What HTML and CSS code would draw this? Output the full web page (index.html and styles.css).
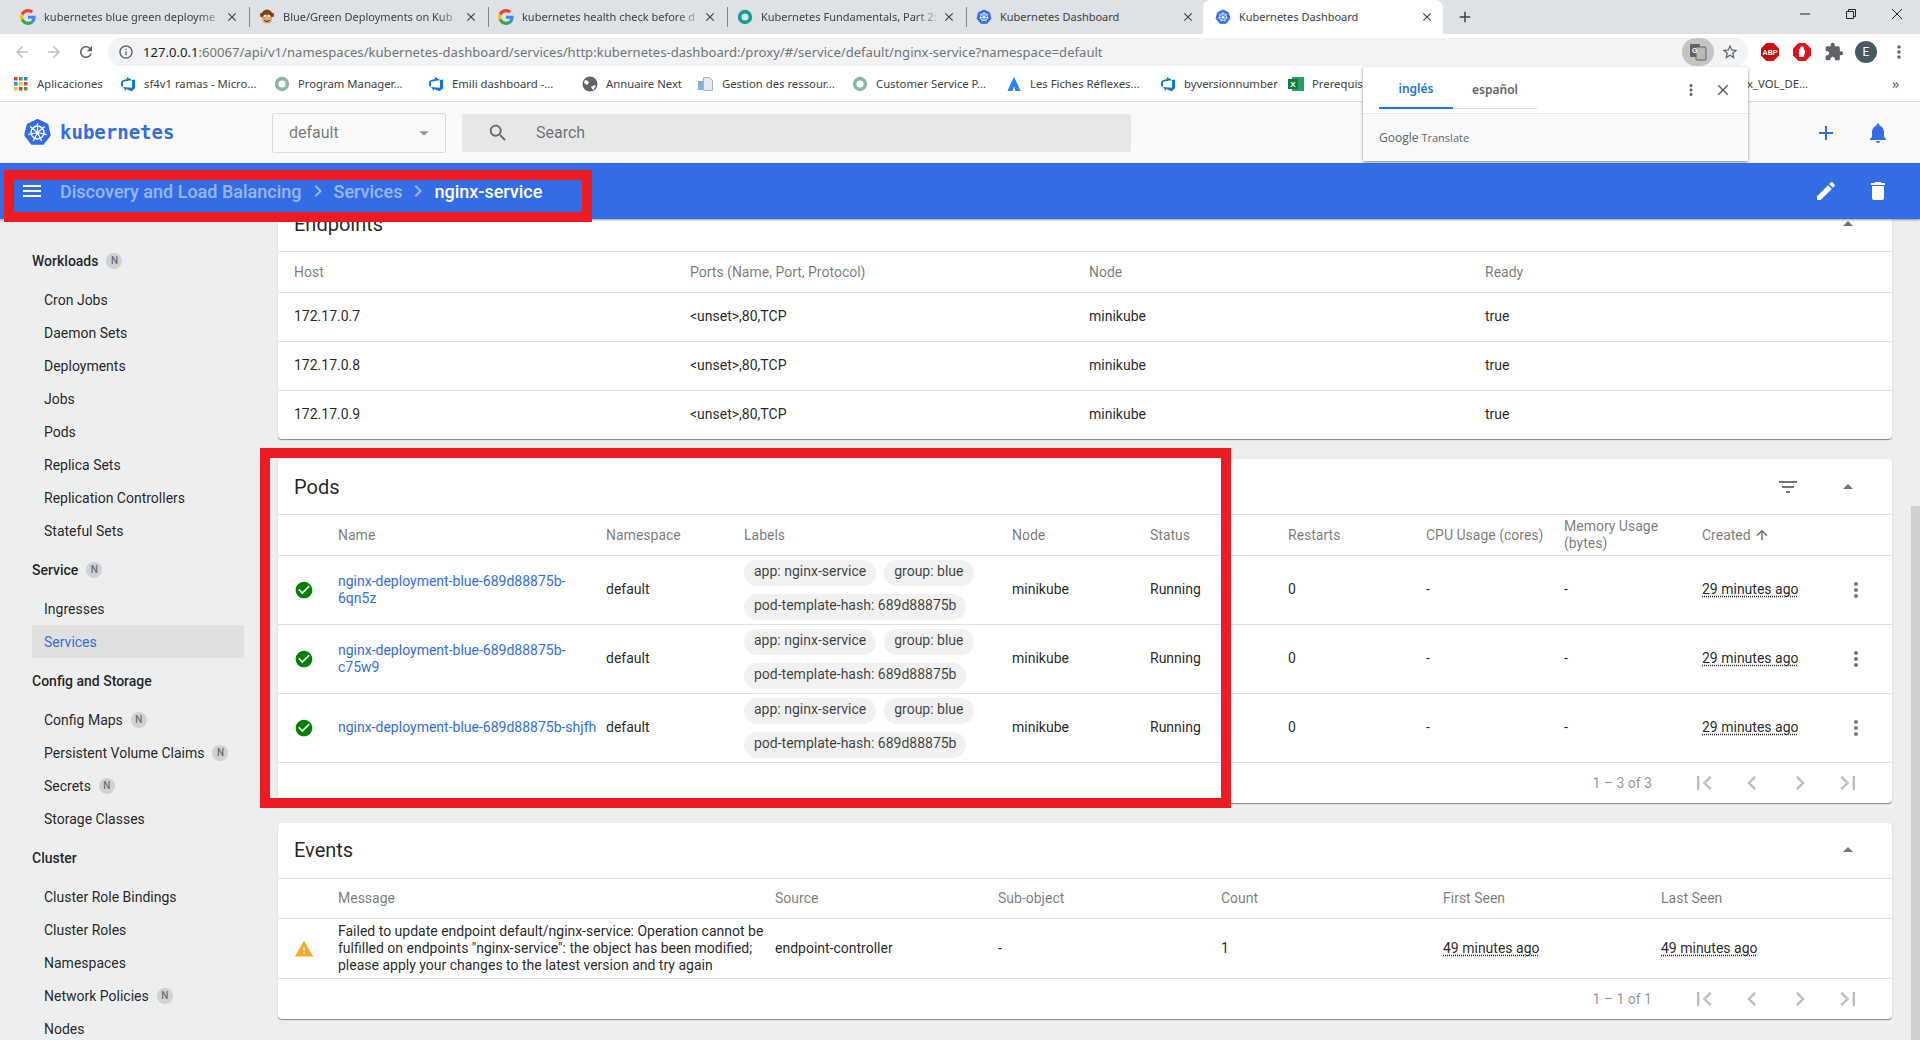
FILE: index.html
```html
<!DOCTYPE html>
<html lang="en">
<head>
  <meta charset="UTF-8" />
  <title>Kubernetes Dashboard</title>
  <link rel="stylesheet" href="styles.css">
</head>
<body>
  <!-- icon sheet -->
  <svg class="sheet" width="0" height="0">
    <symbol id="i-g" viewBox="0 0 48 48">
      <path fill="#EA4335" d="M24 9.5c3.54 0 6.71 1.22 9.21 3.6l6.85-6.85C35.9 2.38 30.47 0 24 0 14.62 0 6.51 5.38 2.56 13.22l7.98 6.19C12.43 13.72 17.74 9.5 24 9.5z"/>
      <path fill="#4285F4" d="M46.98 24.55c0-1.57-.15-3.09-.38-4.55H24v9.02h12.94c-.58 2.96-2.26 5.48-4.78 7.18l7.73 6c4.51-4.18 7.09-10.36 7.09-17.65z"/>
      <path fill="#FBBC05" d="M10.53 28.59c-.48-1.45-.76-2.99-.76-4.59s.27-3.14.76-4.59l-7.98-6.19C.92 16.46 0 20.12 0 24c0 3.88.92 7.54 2.56 10.78l7.97-6.19z"/>
      <path fill="#34A853" d="M24 48c6.48 0 11.93-2.13 15.89-5.81l-7.73-6c-2.15 1.45-4.92 2.3-8.16 2.3-6.26 0-11.57-4.22-13.47-9.91l-7.98 6.19C6.51 42.62 14.62 48 24 48z"/>
    </symbol>
    <symbol id="i-k8s" viewBox="-1 -1 26 26">
      <path fill="#326de6" stroke="#326de6" stroke-width="1.6" stroke-linejoin="round" d="M12 .6 20.9 4.9 23.1 14.5 17 22.2H7L.9 14.5 3.1 4.9z"/>
      <circle cx="12" cy="12" r="5.8" fill="none" stroke="#fff" stroke-width="1.3"/>
      <path stroke="#fff" stroke-width="1.1" d="M12 12V3.5M12 12l6.6-5.3M12 12l8.3 1.9M12 12l3.7 7.7M12 12l-3.7 7.7M12 12l-8.3 1.9M12 12 5.4 6.7"/>
      <circle cx="12" cy="12" r="1.6" fill="#fff"/>
    </symbol>
    <symbol id="i-monkey" viewBox="0 0 16 16">
      <circle cx="3" cy="6" r="2.2" fill="#8a4b1c"/><circle cx="13" cy="6" r="2.2" fill="#8a4b1c"/>
      <circle cx="8" cy="6" r="5.4" fill="#7a3f14"/><ellipse cx="8" cy="10" rx="5" ry="4.6" fill="#e2a868"/>
      <circle cx="6" cy="7" r="1.2" fill="#fff"/><circle cx="10" cy="7" r="1.2" fill="#fff"/>
      <path stroke="#3b1d08" stroke-width="1" fill="none" d="M5.2 11.2c1.6 1.6 4 1.6 5.6 0"/>
    </symbol>
    <symbol id="i-ring" viewBox="0 0 16 16">
      <circle cx="8" cy="8" r="5.4" fill="none" stroke="currentColor" stroke-width="3.6"/>
    </symbol>
    <symbol id="i-azure" viewBox="0 0 18 18">
      <path fill="#0f78d4" d="M17 4v9.74l-4 3.28-6.2-2.26V17l-3.51-4.59 10.23.8V4.44zm-3.41.49L7.85 1v2.29L2.72 4.8 1.2 6.75v4.43l2.2.97V6.47z"/>
    </symbol>
    <symbol id="i-close" viewBox="0 0 24 24"><path d="M19 6.41L17.59 5 12 10.59 6.41 5 5 6.41 10.59 12 5 17.59 6.41 19 12 13.41 17.59 19 19 17.59 13.41 12z"/></symbol>
    <symbol id="i-add" viewBox="0 0 24 24"><path d="M19 13h-6v6h-2v-6H5v-2h6V5h2v6h6v2z"/></symbol>
    <symbol id="i-more" viewBox="0 0 24 24"><path d="M12 8c1.1 0 2-.9 2-2s-.9-2-2-2-2 .9-2 2 .9 2 2 2zm0 2c-1.1 0-2 .9-2 2s.9 2 2 2 2-.9 2-2-.9-2-2-2zm0 6c-1.1 0-2 .9-2 2s.9 2 2 2 2-.9 2-2-.9-2-2-2z"/></symbol>
    <symbol id="i-chev" viewBox="0 0 24 24"><path d="M10 6L8.59 7.41 13.17 12l-4.58 4.59L10 18l6-6z"/></symbol>
    <symbol id="i-up" viewBox="0 0 24 24"><path d="M7 14l5-5 5 5z"/></symbol>
    <symbol id="i-check" viewBox="0 0 24 24"><path d="M12 2C6.48 2 2 6.48 2 12s4.48 10 10 10 10-4.48 10-10S17.52 2 12 2zm-2 15l-5-5 1.41-1.41L10 14.17l7.59-7.59L19 8l-9 9z"/></symbol>
    <symbol id="i-first" viewBox="0 0 24 24"><path d="M18.41 16.59L13.82 12l4.59-4.59L17 6l-6 6 6 6zM6 6h2v12H6z"/></symbol>
    <symbol id="i-prev" viewBox="0 0 24 24"><path d="M15.41 7.41L14 6l-6 6 6 6 1.41-1.41L10.83 12z"/></symbol>
    <symbol id="i-last" viewBox="0 0 24 24"><path d="M5.59 7.41L10.18 12l-4.59 4.59L7 18l6-6-6-6zM16 6h2v12h-2z"/></symbol>
  </svg>

  <!-- browser chrome -->
  <div class="tabstrip">
    <div class="tab"><svg class="fav"><use href="#i-g"/></svg><span class="tab-title">kubernetes blue green deployme</span><svg class="tab-x"><use href="#i-close"/></svg></div>
    <div class="tab"><svg class="fav"><use href="#i-monkey"/></svg><span class="tab-title">Blue/Green Deployments on Kub</span><svg class="tab-x"><use href="#i-close"/></svg></div>
    <div class="tab"><svg class="fav"><use href="#i-g"/></svg><span class="tab-title">kubernetes health check before d</span><svg class="tab-x"><use href="#i-close"/></svg></div>
    <div class="tab"><svg class="fav teal"><use href="#i-ring"/></svg><span class="tab-title">Kubernetes Fundamentals, Part 2:</span><svg class="tab-x"><use href="#i-close"/></svg></div>
    <div class="tab tab-nosep"><svg class="fav"><use href="#i-k8s"/></svg><span class="tab-title tab-full">Kubernetes Dashboard</span><svg class="tab-x"><use href="#i-close"/></svg></div>
    <div class="tab tab-active"><svg class="fav"><use href="#i-k8s"/></svg><span class="tab-title tab-full">Kubernetes Dashboard</span><svg class="tab-x"><use href="#i-close"/></svg></div>
    <svg class="newtab"><use href="#i-add"/></svg>
    <div class="winbtns">
      <svg width="12" height="12" viewBox="0 0 12 12"><path d="M1 6h10" stroke="#222" fill="none"/></svg>
      <svg width="12" height="12" viewBox="0 0 12 12"><path d="M1.500 3.500h7v7h-7zM3.500 3.500v-2h7v7h-2" stroke="#222" fill="none"/></svg>
      <svg width="12" height="12" viewBox="0 0 12 12"><path d="M1 1l10 10M11 1L1 11" stroke="#222" fill="none"/></svg>
    </div>
  </div>

  <div class="toolbar">
    <svg class="nav nav-off" viewBox="0 0 24 24"><path d="M20 11H7.830l5.590-5.590L12 4l-8 8 8 8 1.410-1.410L7.830 13H20v-2z"/></svg>
    <svg class="nav nav-off" viewBox="0 0 24 24"><path d="M12 4l-1.410 1.410L16.170 11H4v2h12.170l-5.580 5.590L12 20l8-8z"/></svg>
    <svg class="nav" viewBox="0 0 24 24"><path d="M17.650 6.350C16.200 4.900 14.210 4 12 4c-4.420 0-7.990 3.580-7.990 8s3.570 8 7.990 8c3.730 0 6.840-2.550 7.730-6h-2.080c-.82 2.330-3.040 4-5.650 4-3.310 0-6-2.690-6-6s2.690-6 6-6c1.660 0 3.140.69 4.220 1.780L13 11h7V4l-2.350 2.350z"/></svg>
    <div class="omnibox">
      <svg class="omni-info" viewBox="0 0 24 24"><path d="M11 7h2v2h-2zm0 4h2v6h-2zm1-9C6.480 2 2 6.480 2 12s4.480 10 10 10 10-4.480 10-10S17.520 2 12 2zm0 18c-4.410 0-8-3.590-8-8s3.590-8 8-8 8 3.590 8 8-3.590 8-8 8z"/></svg>
      <span class="url"><b>127.0.0.1</b>:60067/api/v1/namespaces/kubernetes-dashboard/services/http:kubernetes-dashboard:/proxy/#/service/default/nginx-service?namespace=default</span>
      <span class="translate-btn">
        <svg width="20" height="20" viewBox="0 0 20 20"><rect x="2" y="2" width="10" height="13" rx="1" fill="#5f6368"/><rect x="8" y="5" width="10" height="13" rx="1" fill="#b9b9b9" stroke="#5f6368"/><text x="4" y="11" class="tr-g">G</text></svg>
      </span>
      <svg class="omni-star" viewBox="0 0 24 24"><path d="M22 9.240l-7.190-.62L12 2 9.190 8.630 2 9.240l5.460 4.730L5.820 21 12 17.270 18.180 21l-1.630-7.030L22 9.240zM12 15.400l-3.760 2.270 1-4.280-3.320-2.880 4.380-.38L12 6.100l1.710 4.040 4.380.38-3.320 2.880 1 4.280L12 15.400z"/></svg>
    </div>
    <div class="exts">
      <svg width="18" height="18" viewBox="0 0 18 18"><path fill="#c70d0d" d="M5.500 0h7L18 5.500v7L12.500 18h-7L0 12.500v-7z"/><text x="9" y="12" class="abp">ABP</text></svg>
      <svg width="18" height="18" viewBox="0 0 18 18"><path fill="#e0131a" d="M5.500 0h7L18 5.500v7L12.500 18h-7L0 12.500v-7z"/><path fill="#fff" d="M6 14V6h1.200v-2h1.200v-1h1.200v1h1.200v3h1.200v3l-1.500 4z"/></svg>
      <svg class="ext-puzzle" width="20" height="20" viewBox="0 0 24 24" fill="#5f6368"><path d="M20.500 11H19V7c0-1.100-.9-2-2-2h-4V3.500C13 2.120 11.880 1 10.500 1S8 2.120 8 3.500V5H4c-1.100 0-1.990.9-1.990 2v3.800H3.500c1.490 0 2.700 1.210 2.700 2.700s-1.210 2.700-2.700 2.700H2V20c0 1.100.9 2 2 2h3.800v-1.500c0-1.490 1.210-2.700 2.700-2.700 1.490 0 2.700 1.210 2.700 2.700V22H17c1.100 0 2-.9 2-2v-4h1.500c1.380 0 2.500-1.120 2.500-2.500S21.880 11 20.500 11z"/></svg>
      <span class="avatar">E</span>
      <svg class="ext-more"><use href="#i-more"/></svg>
    </div>
  </div>

  <div class="bookmarks">
    <div class="bm bm-apps"><svg width="16" height="16" viewBox="0 0 16 16"><rect x="1" y="1" width="3.500" height="3.500" fill="#e53935"/><rect x="6" y="1" width="3.500" height="3.500" fill="#43a047"/><rect x="11" y="1" width="3.500" height="3.500" fill="#1e88e5"/><rect x="1" y="6" width="3.500" height="3.500" fill="#1e88e5"/><rect x="6" y="6" width="3.500" height="3.500" fill="#fbc02d"/><rect x="11" y="6" width="3.500" height="3.500" fill="#e53935"/><rect x="1" y="11" width="3.500" height="3.500" fill="#fbc02d"/><rect x="6" y="11" width="3.500" height="3.500" fill="#e53935"/><rect x="11" y="11" width="3.500" height="3.500" fill="#43a047"/></svg>Aplicaciones</div>
    <div class="bm"><svg class="fav"><use href="#i-azure"/></svg>sf4v1 ramas - Micro...</div>
    <div class="bm"><svg class="fav sage"><use href="#i-ring"/></svg>Program Manager...</div>
    <div class="bm"><svg class="fav"><use href="#i-azure"/></svg>Emili dashboard -...</div>
    <div class="bm bm-short"><svg width="16" height="16" viewBox="0 0 16 16"><circle cx="8" cy="8" r="7.500" fill="#5f6368"/><path fill="#fff" d="M3 4l3 1 1 2-2 2-3-2zM9 11l3-2 2 1-3 4z"/></svg>Annuaire Next</div>
    <div class="bm"><svg width="16" height="16" viewBox="0 0 16 16"><rect x="0" y="5" width="5" height="9" fill="#7fb0d8"/><path fill="#e6e9ee" stroke="#a9b2bc" d="M5.500 1.500h6l3 3v10h-9z"/></svg>Gestion des ressour...</div>
    <div class="bm"><svg class="fav sage"><use href="#i-ring"/></svg>Customer Service P...</div>
    <div class="bm"><svg width="16" height="16" viewBox="0 0 16 16"><path fill="#2684ff" d="M8 1l3.500 7L14.500 15h-5L8 10.500 6.500 15h-5L4.500 8z"/></svg>Les Fiches Réflexes...</div>
    <div class="bm bm-mid"><svg class="fav"><use href="#i-azure"/></svg>byversionnumber</div>
    <div class="bm"><svg width="16" height="16" viewBox="0 0 16 16"><rect x="4" y="1" width="12" height="14" fill="#21a366"/><rect x="0" y="3" width="10" height="10" fill="#107c41"/><text x="5" y="11" class="xls">X</text></svg>Prerequisites</div>
    <span class="bm-tail">x_VOL_DE...</span>
    <span class="bm-more">»</span>
  </div>

  <!-- dashboard -->
  <header class="kd-top">
    <svg class="kd-logo"><use href="#i-k8s"/></svg>
    <span class="kd-word">kubernetes</span>
    <div class="ns-select"><span>default</span><svg class="ns-caret" viewBox="0 0 24 24"><path d="M7 10l5 5 5-5z"/></svg></div>
    <div class="search">
      <svg class="search-ico" viewBox="0 0 24 24"><path d="M15.500 14h-.79l-.28-.27C15.410 12.590 16 11.110 16 9.500 16 5.910 13.090 3 9.500 3S3 5.910 3 9.500 5.910 16 9.500 16c1.610 0 3.090-.59 4.230-1.570l.27.28v.79l5 4.990L20.490 19l-4.990-5zm-6 0C7.010 14 5 11.990 5 9.500S7.010 5 9.500 5 14 7.010 14 9.500 11.990 14 9.500 14z"/></svg>
      <span>Search</span>
    </div>
    <div class="kd-actions">
      <svg class="kd-act"><use href="#i-add"/></svg>
      <svg class="kd-act" viewBox="0 0 24 24"><path d="M12 22c1.100 0 2-.9 2-2h-4c0 1.100.89 2 2 2zm6-6v-5c0-3.070-1.640-5.640-4.500-6.320V4c0-.83-.67-1.500-1.500-1.500s-1.500.67-1.500 1.500v.68C7.630 5.360 6 7.920 6 11v5l-2 2v1h16v-1l-2-2z"/></svg>
    </div>
  </header>

  <div class="crumbbar">
    <svg class="crumb-menu" viewBox="0 0 24 24"><path d="M3 18h18v-2H3v2zm0-5h18v-2H3v2zm0-7v2h18V6H3z"/></svg>
    <span class="crumb">Discovery and Load Balancing</span>
    <svg class="crumb-sep"><use href="#i-chev"/></svg>
    <span class="crumb">Services</span>
    <svg class="crumb-sep"><use href="#i-chev"/></svg>
    <span class="crumb crumb-now">nginx-service</span>
    <div class="crumb-actions">
      <svg viewBox="0 0 24 24"><path d="M3 17.250V21h3.750L17.810 9.940l-3.750-3.750L3 17.250zM20.710 7.040c.39-.39.39-1.020 0-1.410l-2.340-2.340c-.39-.39-1.020-.39-1.410 0l-1.830 1.830 3.750 3.750 1.830-1.830z"/></svg>
      <svg viewBox="0 0 24 24"><path d="M6 19c0 1.100.9 2 2 2h8c1.100 0 2-.9 2-2V7H6v12zM19 4h-3.500l-1-1h-5l-1 1H5v2h14V4z"/></svg>
    </div>
  </div>

  <div class="layout">
    <nav class="side">
      <div class="side-title">Workloads <span class="badge">N</span></div>
      <a class="side-item">Cron Jobs</a>
      <a class="side-item">Daemon Sets</a>
      <a class="side-item">Deployments</a>
      <a class="side-item">Jobs</a>
      <a class="side-item">Pods</a>
      <a class="side-item">Replica Sets</a>
      <a class="side-item">Replication Controllers</a>
      <a class="side-item">Stateful Sets</a>
      <div class="side-title">Service <span class="badge">N</span></div>
      <a class="side-item">Ingresses</a>
      <a class="side-item side-on">Services</a>
      <div class="side-title">Config and Storage</div>
      <a class="side-item">Config Maps <span class="badge">N</span></a>
      <a class="side-item">Persistent Volume Claims <span class="badge">N</span></a>
      <a class="side-item">Secrets <span class="badge">N</span></a>
      <a class="side-item">Storage Classes</a>
      <div class="side-title">Cluster</div>
      <a class="side-item">Cluster Role Bindings</a>
      <a class="side-item">Cluster Roles</a>
      <a class="side-item">Namespaces</a>
      <a class="side-item">Network Policies <span class="badge">N</span></a>
      <a class="side-item">Nodes</a>
    </nav>

    <main class="content">
      <section class="card card-first">
        <div class="card-head">
          <h3>Endpoints</h3>
          <svg class="card-toggle"><use href="#i-up"/></svg>
        </div>
        <table class="tbl tbl-endpoints">
          <colgroup><col class="ep1"><col class="ep2"><col class="ep3"><col></colgroup>
          <thead><tr><th>Host</th><th>Ports (Name, Port, Protocol)</th><th>Node</th><th>Ready</th></tr></thead>
          <tbody>
            <tr><td>172.17.0.7</td><td>&lt;unset&gt;,80,TCP</td><td>minikube</td><td>true</td></tr>
            <tr><td>172.17.0.8</td><td>&lt;unset&gt;,80,TCP</td><td>minikube</td><td>true</td></tr>
            <tr><td>172.17.0.9</td><td>&lt;unset&gt;,80,TCP</td><td>minikube</td><td>true</td></tr>
          </tbody>
        </table>
      </section>

      <section class="card">
        <div class="card-head">
          <h3>Pods</h3>
          <svg class="card-filter" viewBox="0 0 24 24"><path d="M10 18h4v-2h-4v2zM3 6v2h18V6H3zm3 7h12v-2H6v2z"/></svg>
          <svg class="card-toggle"><use href="#i-up"/></svg>
        </div>
        <table class="tbl tbl-pods">
          <colgroup><col class="p0"><col class="p1"><col class="p2"><col class="p3"><col class="p4"><col class="p4"><col class="p4"><col class="p4"><col class="p4"><col class="p5"><col></colgroup>
          <thead><tr><th></th><th>Name</th><th>Namespace</th><th>Labels</th><th>Node</th><th>Status</th><th>Restarts</th><th>CPU Usage (cores)</th><th>Memory Usage (bytes)</th><th>Created <svg class="sort" viewBox="0 0 24 24"><path d="M4 12l1.410 1.410L11 7.830V20h2V7.830l5.580 5.590L20 12l-8-8-8 8z"/></svg></th><th></th></tr></thead>
          <tbody>
            <tr>
              <td class="cell-ico"><svg class="ok"><use href="#i-check"/></svg></td>
              <td><a class="lnk">nginx-deployment-blue-689d88875b-6qn5z</a></td>
              <td>default</td>
              <td><div class="chips"><span class="chip">app: nginx-service</span><span class="chip">group: blue</span><span class="chip">pod-template-hash: 689d88875b</span></div></td>
              <td>minikube</td><td>Running</td><td>0</td><td>-</td><td>-</td>
              <td><span class="ago">29 minutes ago</span></td>
              <td class="cell-more"><svg class="more"><use href="#i-more"/></svg></td>
            </tr>
            <tr>
              <td class="cell-ico"><svg class="ok"><use href="#i-check"/></svg></td>
              <td><a class="lnk">nginx-deployment-blue-689d88875b-c75w9</a></td>
              <td>default</td>
              <td><div class="chips"><span class="chip">app: nginx-service</span><span class="chip">group: blue</span><span class="chip">pod-template-hash: 689d88875b</span></div></td>
              <td>minikube</td><td>Running</td><td>0</td><td>-</td><td>-</td>
              <td><span class="ago">29 minutes ago</span></td>
              <td class="cell-more"><svg class="more"><use href="#i-more"/></svg></td>
            </tr>
            <tr>
              <td class="cell-ico"><svg class="ok"><use href="#i-check"/></svg></td>
              <td><a class="lnk">nginx-deployment-blue-689d88875b-shjfh</a></td>
              <td>default</td>
              <td><div class="chips"><span class="chip">app: nginx-service</span><span class="chip">group: blue</span><span class="chip">pod-template-hash: 689d88875b</span></div></td>
              <td>minikube</td><td>Running</td><td>0</td><td>-</td><td>-</td>
              <td><span class="ago">29 minutes ago</span></td>
              <td class="cell-more"><svg class="more"><use href="#i-more"/></svg></td>
            </tr>
          </tbody>
        </table>
        <div class="pager">
          <span class="pager-range">1 – 3 of 3</span>
          <svg><use href="#i-first"/></svg><svg><use href="#i-prev"/></svg><svg><use href="#i-chev"/></svg><svg><use href="#i-last"/></svg>
        </div>
      </section>

      <section class="card">
        <div class="card-head">
          <h3>Events</h3>
          <svg class="card-toggle"><use href="#i-up"/></svg>
        </div>
        <table class="tbl tbl-events">
          <colgroup><col class="p0"><col class="e1"><col class="e2"><col class="e3"><col class="e3b"><col class="e4"><col></colgroup>
          <thead><tr><th></th><th>Message</th><th>Source</th><th>Sub-object</th><th>Count</th><th>First Seen</th><th>Last Seen</th></tr></thead>
          <tbody>
            <tr>
              <td class="cell-ico"><svg class="warn" viewBox="0 0 24 24"><path d="M1 21h22L12 2 1 21zm12-3h-2v-2h2v2zm0-4h-2v-4h2v4z"/></svg></td>
              <td>Failed to update endpoint default/nginx-service: Operation cannot be fulfilled on endpoints "nginx-service": the object has been modified; please apply your changes to the latest version and try again</td>
              <td>endpoint-controller</td><td>-</td><td>1</td>
              <td><span class="ago">49 minutes ago</span></td>
              <td><span class="ago">49 minutes ago</span></td>
            </tr>
          </tbody>
        </table>
        <div class="pager">
          <span class="pager-range">1 – 1 of 1</span>
          <svg><use href="#i-first"/></svg><svg><use href="#i-prev"/></svg><svg><use href="#i-chev"/></svg><svg><use href="#i-last"/></svg>
        </div>
      </section>
    </main>
  </div>

  <div class="thumb"></div>

  <!-- translate bubble -->
  <div class="bubble">
    <div class="bubble-top">
      <div class="bubble-tabs"><span class="bt bt-on">inglés</span><span class="bt">español</span></div>
      <svg class="bubble-more"><use href="#i-more"/></svg>
      <svg class="bubble-x"><use href="#i-close"/></svg>
    </div>
    <div class="bubble-foot"><span class="g-word">Google</span> Translate</div>
  </div>

  <!-- annotation boxes drawn on the screenshot -->
  <div class="mark mark-crumb"></div>
  <div class="mark mark-pods"></div>
</body>
</html>
```

FILE: styles.css
```css
* {
  box-sizing: border-box;
}

html, body {
  margin: 0;
  height: 1040px;
  overflow: hidden;
}

body {
  position: relative;
  background: #edeef0;
  font-family: Roboto, sans-serif;
  font-size: 14px;
  color: rgba(0,0,0,.87);
}

.sheet {
  position: absolute;
}

svg {
  flex: none;
}

/* browser chrome */
.tabstrip {
  display: flex;
  align-items: center;
  height: 34px;
  padding-left: 11px;
  background: #dee1e6;
}

.tab {
  position: relative;
  display: flex;
  align-items: center;
  width: 239px;
  flex: none;
  height: 34px;
  padding-left: 9px;
  font-family: "Noto Sans", sans-serif;
  font-size: 11px;
  color: #3c4043;
}

.tab::after {
  content: "";
  position: absolute;
  right: 0;
  top: 7px;
  width: 1px;
  height: 20px;
  background: #80868b;
}

.tab-nosep::after, .tab-active::after {
  display: none;
}

.tab-active {
  width: 240px;
  margin-left: -3px;
  padding-left: 12px;
  background: #fff;
  border-radius: 8px 8px 0 0;
}

.fav {
  width: 16px;
  height: 16px;
}

.teal {
  color: #0f9d9d;
}

.sage {
  color: #8db5a6;
}

.tab-title {
  width: 176px;
  margin-left: 8px;
  margin-top: -2px;
  white-space: nowrap;
  -webkit-mask-image: linear-gradient(to right, #000 88%, rgba(0,0,0,.2));
  mask-image: linear-gradient(to right, #000 88%, rgba(0,0,0,.2));
}

.tab-full {
  -webkit-mask-image: none;
  mask-image: none;
}

.tab-x {
  width: 14px;
  height: 14px;
  margin-left: 5px;
  fill: #3c4043;
}

.newtab {
  width: 18px;
  height: 18px;
  margin-left: 13px;
  fill: #3c4043;
}

.winbtns {
  display: flex;
  gap: 34px;
  margin-left: auto;
  margin-right: 17px;
  margin-top: -6px;
}

.toolbar {
  display: flex;
  align-items: center;
  height: 32px;
  padding: 4px 0 0 13px;
  background: #fff;
}

.nav {
  width: 18px;
  height: 18px;
  margin-right: 14px;
  fill: #5f6368;
}

.nav-off {
  fill: #bdc1c6;
}

.omnibox {
  display: flex;
  align-items: center;
  width: 1640px;
  height: 28px;
  margin-left: -1px;
  padding-left: 10px;
  border-radius: 14px;
  background: #f1f3f4;
}

.omni-info {
  width: 16px;
  height: 16px;
  fill: #5f6368;
}

.url {
  margin-left: 9px;
  font-family: "Noto Sans", sans-serif;
  font-size: 13.1px;
  color: #70757a;
  white-space: nowrap;
}

.url b {
  font-weight: 400;
  color: #202124;
}

.translate-btn {
  display: flex;
  align-items: center;
  justify-content: center;
  width: 32px;
  height: 28px;
  margin-left: auto;
  border-radius: 14px;
  background: #c4c4c4;
}

.tr-g {
  font: bold 7px "Liberation Sans", sans-serif;
  fill: #fff;
}

.omni-star {
  width: 18px;
  height: 18px;
  margin: 0 9px 0 7px;
  fill: #5f6368;
}

.exts {
  display: flex;
  align-items: center;
  gap: 14px;
  margin-left: 13px;
}

.ext-puzzle {
  margin-left: -1px;
}

.abp {
  font: bold 7px "Liberation Sans", sans-serif;
  fill: #fff;
  text-anchor: middle;
}

.avatar {
  display: flex;
  align-items: center;
  justify-content: center;
  width: 22px;
  height: 22px;
  margin: 0 -2px 0 -3px;
  border-radius: 50%;
  background: #455a64;
  color: #fff;
  font-size: 12px;
}

.ext-more {
  width: 20px;
  height: 20px;
  fill: #5f6368;
}

.bookmarks {
  position: relative;
  display: flex;
  align-items: center;
  height: 36px;
  padding-left: 13px;
  background: #fff;
  border-bottom: 1px solid #d9dadc;
  font-family: "Noto Sans", sans-serif;
  font-size: 11.3px;
  color: #3c4043;
  white-space: nowrap;
}

.bm {
  display: flex;
  align-items: center;
  gap: 8px;
  width: 154px;
  flex: none;
}

.bm-apps {
  width: 107px;
}

.bm-short {
  width: 116px;
}

.bm-mid {
  width: 128px;
}

.bm-tail {
  position: absolute;
  left: 1747px;
}

.bm-more {
  position: absolute;
  left: 1892px;
  font-size: 14px;
  color: #5f6368;
}

.xls {
  font: bold 8px "Liberation Sans", sans-serif;
  fill: #fff;
  text-anchor: middle;
}

/* dashboard top */
.kd-top {
  display: flex;
  align-items: center;
  height: 61px;
  padding-left: 23px;
  background: #fafafa;
}

.kd-logo {
  width: 29px;
  height: 31px;
}

.kd-word {
  width: 212px;
  margin-left: 8px;
  padding-bottom: 1px;
  font-family: "DejaVu Sans Mono", monospace;
  font-size: 19px;
  font-weight: bold;
  color: #326de6;
}

.ns-select {
  display: flex;
  align-items: center;
  justify-content: space-between;
  width: 174px;
  height: 40px;
  padding: 0 10px 0 16px;
  border: 1px solid #dcdcdc;
  border-radius: 2px;
  font-size: 16px;
  color: rgba(0,0,0,.54);
}

.ns-caret {
  width: 22px;
  height: 22px;
  fill: rgba(0,0,0,.4);
}

.search {
  display: flex;
  align-items: center;
  width: 669px;
  height: 38px;
  margin-left: 16px;
  padding-left: 25px;
  border-radius: 2px;
  background: #e5e7e8;
  font-size: 16px;
  color: rgba(0,0,0,.54);
}

.search-ico {
  width: 22px;
  height: 22px;
  margin-right: 27px;
  fill: rgba(0,0,0,.54);
}

.kd-actions {
  display: flex;
  gap: 28px;
  margin-left: auto;
  margin-right: 30px;
}

.kd-act {
  width: 24px;
  height: 24px;
  fill: #326de6;
}

/* breadcrumb bar */
.crumbbar {
  position: relative;
  z-index: 2;
  display: flex;
  align-items: center;
  height: 56px;
  padding-left: 20px;
  background: #326de6;
  box-shadow: 0 1px 2px rgba(0,0,0,.4);
  font-size: 18px;
  font-weight: 500;
  color: #fff;
}

.crumb-menu {
  width: 24px;
  height: 24px;
  margin-right: 16px;
  fill: #fff;
}

.crumb {
  color: rgba(255,255,255,.5);
}

.crumb-now {
  color: #fff;
}

.crumb-sep {
  width: 24px;
  height: 24px;
  margin: 0 4px;
  fill: rgba(255,255,255,.5);
}

.crumb-actions {
  display: flex;
  gap: 28px;
  margin-left: auto;
  margin-right: 30px;
}

.crumb-actions svg {
  width: 24px;
  height: 24px;
  fill: #fff;
}

/* sidebar */
.layout {
  display: flex;
  height: 821px;
  overflow: hidden;
}

.side {
  width: 256px;
  flex: none;
  padding: 25px 12px 0 32px;
}

.side-title {
  display: flex;
  align-items: center;
  height: 33px;
  margin-bottom: 6px;
  font-weight: 500;
}

.side-item {
  display: flex;
  align-items: center;
  height: 33px;
  padding-left: 12px;
  border-radius: 2px;
}

.side-item + .side-title {
  margin-top: 6px;
}

.side-on {
  background: #e0e0e0;
  color: #326de6;
}

.badge {
  display: inline-flex;
  align-items: center;
  justify-content: center;
  width: 16px;
  height: 16px;
  margin-left: 8px;
  border-radius: 50%;
  background: #d0d1d3;
  color: rgba(0,0,0,.5);
  font-size: 10px;
  font-weight: 500;
}

/* cards */
.content {
  width: 1614px;
  flex: none;
  margin-left: 22px;
}

.card {
  margin-bottom: 20px;
  border-radius: 4px;
  background: #fff;
  box-shadow: 0 1px 1px rgba(0,0,0,.45);
}

.card-first {
  margin-top: -23px;
}

.card-head {
  display: flex;
  align-items: center;
  height: 56px;
  padding-left: 16px;
  border-bottom: 1px solid #e0e0e0;
}

.card-head h3 {
  margin: 0;
  font-size: 20px;
  font-weight: 400;
}

.card-filter {
  width: 24px;
  height: 24px;
  margin-left: auto;
  margin-right: 36px;
  fill: rgba(0,0,0,.54);
}

.card-toggle {
  width: 24px;
  height: 24px;
  margin-left: auto;
  margin-right: 32px;
  fill: rgba(0,0,0,.54);
}

.card-filter + .card-toggle {
  margin-left: 0;
}

.tbl {
  width: 100%;
  table-layout: fixed;
  border-collapse: collapse;
}

.tbl th {
  height: 40px;
  padding: 1px 8px 0 0;
  text-align: left;
  font-weight: 400;
  line-height: 17px;
  color: rgba(0,0,0,.54);
  border-bottom: 1px solid #e0e0e0;
}

.tbl td {
  padding: 0 8px 0 0;
  line-height: 17px;
  border-bottom: 1px solid #e0e0e0;
}

.tbl-endpoints td {
  height: 49px;
}

.tbl-endpoints tbody tr:last-child td {
  border-bottom: 0;
}

.tbl-endpoints th:first-child, .tbl-endpoints td:first-child {
  padding-left: 16px;
}

.ep1 { width: 412px; }
.ep2 { width: 399px; }
.ep3 { width: 396px; }

.p0 { width: 60px; }
.p1 { width: 268px; }
.p2 { width: 138px; }
.p3 { width: 268px; }
.p4 { width: 138px; }
.p5 { width: 138px; }

.e1 { width: 437px; }
.e2 { width: 223px; }
.e3 { width: 223px; }
.e3b { width: 222px; }
.e4 { width: 218px; }

.tbl-pods td {
  height: 69px;
}

.tbl-events td {
  height: 60px;
}

.cell-ico {
  text-align: center;
}

.ok {
  width: 20px;
  height: 20px;
  fill: #008000;
  vertical-align: middle;
}

.warn {
  width: 20px;
  height: 20px;
  fill: #f9a825;
  vertical-align: middle;
}

.lnk {
  color: #326de6;
}

.chips {
  display: flex;
  flex-wrap: wrap;
  gap: 8px;
}

.chip {
  display: flex;
  align-items: center;
  height: 26px;
  padding: 0 10px 2px;
  border-radius: 13px;
  background: #f1f1f1;
  white-space: nowrap;
  color: rgba(0,0,0,.75);
}

.ago {
  text-decoration: underline dotted;
  text-underline-offset: 2px;
}

.sort {
  width: 16px;
  height: 16px;
  fill: rgba(0,0,0,.6);
  vertical-align: -3px;
}

.cell-more {
  padding-left: 4px !important;
}

.more {
  width: 24px;
  height: 24px;
  fill: rgba(0,0,0,.54);
  vertical-align: middle;
}

.pager {
  display: flex;
  align-items: center;
  justify-content: flex-end;
  gap: 20px;
  height: 40px;
  padding-right: 30px;
  color: rgba(0,0,0,.45);
}

.pager svg {
  width: 28px;
  height: 28px;
  fill: rgba(0,0,0,.26);
}

.pager-range {
  margin-right: 18px;
}

.thumb {
  position: absolute;
  right: 0;
  top: 506px;
  bottom: 0;
  width: 9px;
  background: #cfd0d2;
}

/* translate bubble */
.bubble {
  position: absolute;
  z-index: 3;
  left: 1363px;
  top: 67px;
  width: 385px;
  height: 94px;
  border-radius: 2px;
  background: #fff;
  box-shadow: 0 1px 3px rgba(0,0,0,.5);
}

.bubble-top {
  display: flex;
  align-items: center;
  height: 47px;
  padding: 0 16px 0 16px;
  border-bottom: 1px solid #e6e7e9;
}

.bubble-tabs {
  display: flex;
  width: 158px;
  height: 39px;
  border-bottom: 1px solid #dadce0;
  margin-top: -1px;
  font-family: "Noto Sans", sans-serif;
  font-size: 12px;
  font-weight: 600;
}

.bt {
  display: flex;
  align-items: center;
  justify-content: center;
  width: 84px;
  color: #5f6368;
}

.bt-on {
  width: 74px;
  margin-bottom: -1px;
  border-bottom: 2px solid #1a73e8;
  color: #1a73e8;
}

.bubble-more {
  width: 18px;
  height: 18px;
  margin-left: auto;
  fill: #5f6368;
}

.bubble-x {
  width: 18px;
  height: 18px;
  margin-left: 14px;
  fill: #5f6368;
}

.bubble-foot {
  display: flex;
  align-items: center;
  gap: 3px;
  height: 47px;
  padding-left: 16px;
  background: #f8f9fa;
  font-family: "Open Sans", sans-serif;
  font-size: 11px;
  color: #5f6368;
}

.g-word {
  font-size: 12px;
}

/* red annotation boxes */
.mark {
  position: absolute;
  z-index: 4;
  border: 10px solid #ed1c24;
}

.mark-crumb {
  left: 4px;
  top: 170px;
  width: 588px;
  height: 52px;
}

.mark-pods {
  left: 260px;
  top: 448px;
  width: 971px;
  height: 360px;
}
```
